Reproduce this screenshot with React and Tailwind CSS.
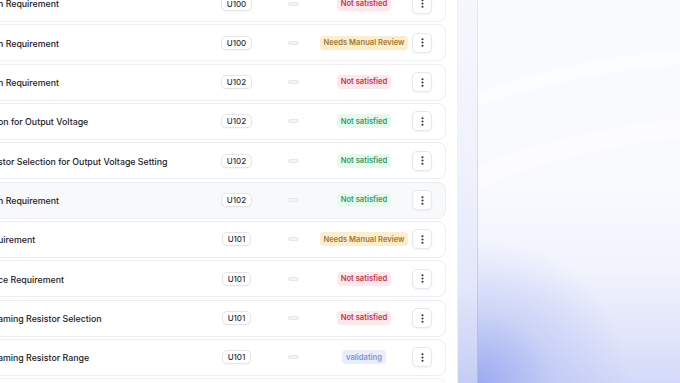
import { EllipsisVertical } from "lucide-react"

const rows = [
  { title: "n Requirement", unit: "U100", status: "red" },
  { title: "n Requirement", unit: "U100", status: "amber" },
  { title: "n Requirement", unit: "U102", status: "red" },
  { title: "on for Output Voltage", unit: "U102", status: "green" },
  { title: "stor Selection for Output Voltage Setting", unit: "U102", status: "green" },
  { title: "n Requirement", unit: "U102", status: "green", active: true },
  { title: "uirement", unit: "U101", status: "amber" },
  { title: "ce Requirement", unit: "U101", status: "red" },
  { title: "aming Resistor Selection", unit: "U101", status: "red" },
  { title: "aming Resistor Range", unit: "U101", status: "blue" },
  { title: "n Requirement", unit: "U101", status: "green" },
]

const statusStyles = {
  red: { label: "Not satisfied", cls: "bg-[#fde8ec] text-[#c93449]" },
  green: { label: "Not satisfied", cls: "bg-[#e7f8ed] text-[#379c60]" },
  amber: { label: "Needs Manual Review", cls: "bg-[#fcedcc] text-[#9f7a33]" },
  blue: { label: "validating", cls: "bg-[#eaedfb] text-[#8793d6]" },
}

function Row({ row }) {
  const s = statusStyles[row.status]
  return (
    <div
      className={
        "h-[37px] shrink-0 flex items-center rounded-lg border border-[#eceef1] pr-[13px] " +
        (row.active ? "bg-[#f8f9fb]" : "bg-white")
      }
    >
      <div className="flex-1 min-w-0 pl-[17px] pt-[1px] text-[8.8px] font-medium text-[#1d2027] whitespace-nowrap overflow-hidden">
        {row.title}
      </div>
      <div className="w-[65px] flex justify-center">
        <span className="h-[14px] px-[4.5px] inline-flex items-center rounded-[5px] border border-[#e3e5e9] bg-white text-[8px] font-medium text-[#2f333b] shadow-[0_1px_1px_rgba(0,0,0,0.03)]">
          {row.unit}
        </span>
      </div>
      <div className="w-[48px] flex justify-center">
        <span className="w-[11px] h-[4px] rounded-[2px] border border-[#e6e8ec] bg-[#f4f5f7]" />
      </div>
      <div className="w-[94px] flex justify-center">
        <span className={"h-[14px] px-[4px] inline-flex items-center rounded-[4px] text-[7.6px] font-semibold " + s.cls}>
          {s.label}
        </span>
      </div>
      <button
        type="button"
        className="ml-[1px] h-[20px] w-[20px] inline-flex items-center justify-center rounded-[5px] border border-[#e6e8ec] bg-white text-[#2b2f36] shadow-[0_1px_2px_rgba(0,0,0,0.05)]"
      >
        <EllipsisVertical size={11} strokeWidth={2.6} />
      </button>
    </div>
  )
}

export default function App() {
  return (
    <div
      className="w-[680px] h-[383px] overflow-hidden flex bg-white"
      style={{ fontFamily: "Inter, 'Noto Sans', sans-serif" }}
    >
      <div className="w-[457px] shrink-0 bg-white overflow-hidden">
        <div className="ml-[-20px] mr-[11px] mt-[-15px] flex flex-col gap-[2.33px]">
          {rows.map((r, i) => (
            <Row key={i} row={r} />
          ))}
        </div>
      </div>
      <div className="w-[20px] shrink-0 border-l border-[#eef0f8] bg-[linear-gradient(180deg,#f6f7fd_0%,#eff1fc_45%,#e3e7fa_75%,#c5cdf5_100%)]" />
      <div className="w-[1px] shrink-0 bg-[linear-gradient(180deg,#e2e6f8_0%,#cfd6f4_60%,#a9b6ef_100%)]" />
      <div className="relative flex-1 overflow-hidden bg-[linear-gradient(180deg,#fafbfe_0%,#f9fafe_50%,#f1f3fd_70%,#e1e5fa_88%,#d3d9f8_100%)]">
        <div className="absolute inset-0 bg-[radial-gradient(ellipse_75%_38%_at_0%_100%,rgba(150,166,240,0.9)_0%,rgba(175,188,243,0.45)_50%,rgba(200,210,248,0)_100%)]" />
        <svg className="absolute inset-0" width="202" height="383" viewBox="0 0 202 383">
          <path d="M0 100 C 60 78, 130 62, 202 58" fill="none" stroke="#ffffff" strokeOpacity="0.5" strokeWidth="14" />
          <path d="M0 178 C 60 152, 130 136, 202 128" fill="none" stroke="#ffffff" strokeOpacity="0.45" strokeWidth="20" />
        </svg>
      </div>
    </div>
  )
}
